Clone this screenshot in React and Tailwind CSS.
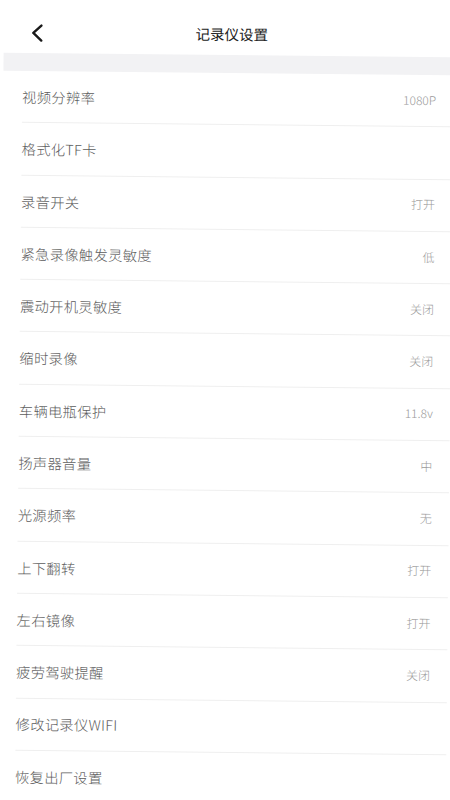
import React from "react";

const rows = [
  ["视频分辨率", "1080P"],
  ["格式化TF卡", ""],
  ["录音开关", "打开"],
  ["紧急录像触发灵敏度", "低"],
  ["震动开机灵敏度", "关闭"],
  ["缩时录像", "关闭"],
  ["车辆电瓶保护", "11.8v"],
  ["扬声器音量", "中"],
  ["光源频率", "无"],
  ["上下翻转", "打开"],
  ["左右镜像", "打开"],
  ["疲劳驾驶提醒", "关闭"],
  ["修改记录仪WIFI", ""],
  ["恢复出厂设置", ""],
];

export default function App() {
  return (
    <div className="w-[450px] h-[800px] overflow-hidden bg-white">
      <div
        className="w-[450px] h-[800px] bg-white rotate-[0.6deg] origin-center"
        style={{ fontFamily: '"Noto Sans CJK SC", "Noto Sans", sans-serif' }}
      >
        <div className="h-[55px] flex items-center relative">
          <div className="pl-[25px] pt-[15px]">
            <svg width="18" height="18" viewBox="0 0 18 18" fill="none">
              <path d="M12.5 1.5 L4.5 9 L12.5 16.5" stroke="#1a1a1a" strokeWidth="2.4" strokeLinecap="round" strokeLinejoin="round" />
            </svg>
          </div>
          <div className="absolute inset-0 flex items-center justify-center pt-[13px] pl-[6px] text-[14.5px] text-[#222]">
            记录仪设置
          </div>
        </div>
        <div className="h-[18px] bg-[#f2f2f4]" />
        <div className="pl-[19px]">
          {rows.map(([label, value], i) => (
            <div
              key={i}
              className={
                "h-[52.3px] flex items-center justify-between pr-[17px] " +
                (i < rows.length - 1 ? "border-b border-[#efefef]" : "")
              }
            >
              <span className="text-[14.3px] text-[#5c5c5c] font-light tracking-[0.3px]">{label}</span>
              <span className="text-[12px] text-[#9a9a9a] font-light pb-[2px]">{value}</span>
            </div>
          ))}
        </div>
      </div>
    </div>
  );
}
